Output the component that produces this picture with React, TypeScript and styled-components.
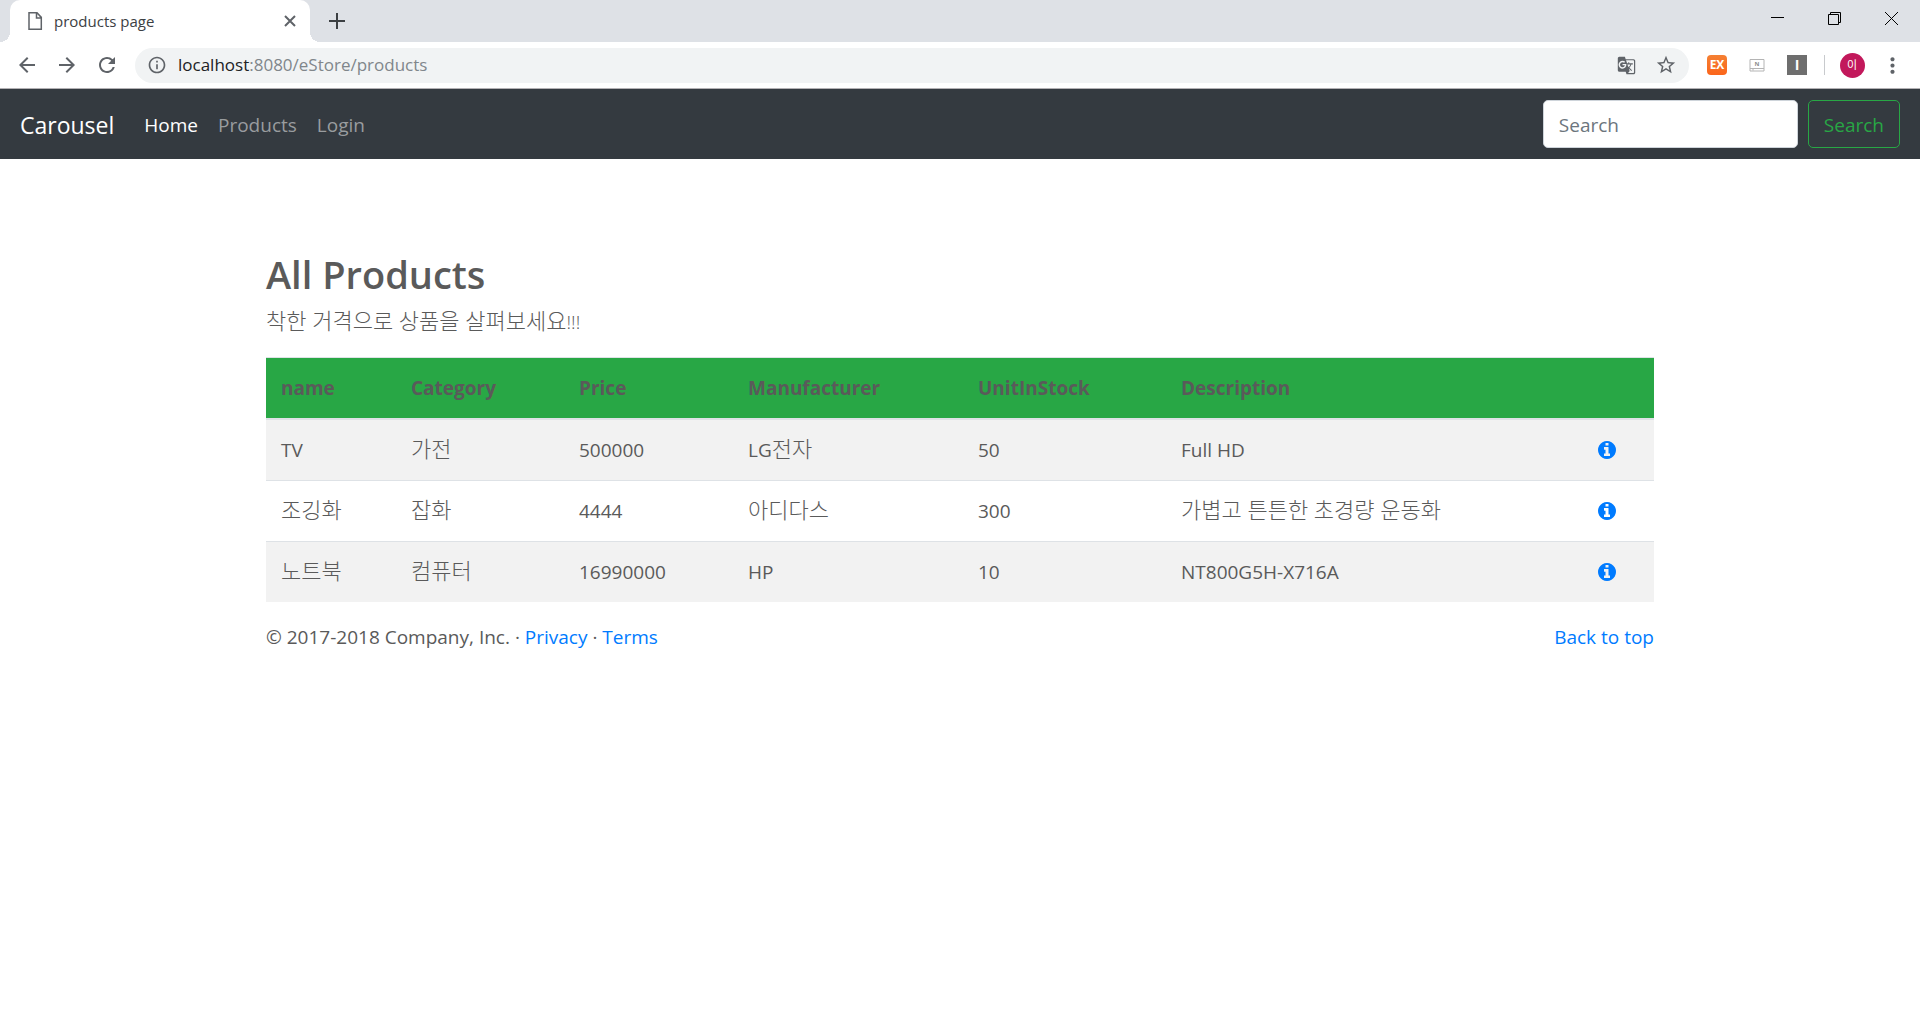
import React from "react";
import styled, { createGlobalStyle, css } from "styled-components";
import { MdArrowBack, MdArrowForward, MdRefresh, MdInfoOutline, MdStarBorder, MdGTranslate, MdMoreVert } from "react-icons/md";

const GlobalStyle = createGlobalStyle`
  *, *::before, *::after { box-sizing: border-box; }
  body {
    margin: 0;
    background: #fff;
    color: #5a5a5a;
    font-family: "Open Sans", "Noto Sans CJK KR", sans-serif;
    font-size: 19px;
    line-height: 30px;
  }
  button, input { font: inherit; }
  button { cursor: pointer; }
`;

/* Browser window */

const TabStrip = styled.header`
  display: flex;
  align-items: stretch;
  height: 42px;
  padding-left: 10px;
  background: #dee1e6;
`;

const Tab = styled.div`
  position: relative;
  display: flex;
  align-items: center;
  width: 300px;
  padding: 0 12px 0 16px;
  border-radius: 10px 10px 0 0;
  background: #fff;
  color: #3c4043;
  font-size: 15px;
  line-height: 20px;

  &::before,
  &::after {
    content: "";
    position: absolute;
    bottom: 0;
    width: 10px;
    height: 10px;
  }
  &::before {
    left: -10px;
    background: radial-gradient(circle at 0 0, transparent 10px, #fff 10px);
  }
  &::after {
    right: -10px;
    background: radial-gradient(circle at 100% 0, transparent 10px, #fff 10px);
  }
`;

const TabTitle = styled.span`
  flex: 1;
  margin-left: 10px;
`;

const IconButton = styled.button<{ $size?: number; $color?: string }>`
  display: flex;
  align-items: center;
  justify-content: center;
  flex: none;
  width: ${(p) => p.$size ?? 40}px;
  height: ${(p) => p.$size ?? 40}px;
  padding: 0;
  border: 0;
  background: none;
  color: ${(p) => p.$color ?? "#5f6368"};
`;

const NewTab = styled(IconButton)`
  margin: 6px 0 0 12px;
`;

const WindowControls = styled.div`
  display: flex;
  margin-left: auto;
`;

const WindowButton = styled(IconButton)`
  width: 57px;
  height: 37px;
`;

const Toolbar = styled.div`
  display: flex;
  align-items: center;
  height: 47px;
  padding: 0 8px 0 7px;
  border-bottom: 1px solid #b3b1b4;
  background: #fff;
`;

const AddressBar = styled.div`
  display: flex;
  align-items: center;
  flex: 1;
  height: 35px;
  margin: 0 8px;
  padding: 0 3px 0 12px;
  border-radius: 18px;
  background: #f1f3f4;
  color: #5f6368;
`;

const Url = styled.div`
  flex: 1;
  margin-left: 11px;
  color: #80868b;
  font-size: 17px;
  line-height: 24px;
`;

const UrlHost = styled.span`
  color: #202124;
`;

const ExtensionBadge = styled.span<{ $kind: "ex" | "plain" }>`
  display: flex;
  align-items: center;
  justify-content: center;
  width: 20px;
  height: 20px;
  color: #fff;
  font-weight: 700;
  line-height: 20px;
  ${(p) =>
    p.$kind === "ex"
      ? css`
          border-radius: 4px;
          background: linear-gradient(#f58033, #fb651b);
          font-size: 12px;
        `
      : css`
          background: #6e6e6e;
          font-size: 14px;
        `}
`;

const Divider = styled.span`
  width: 1px;
  height: 20px;
  margin: 0 7px;
  background: #c8cacd;
`;

const Avatar = styled.span`
  width: 25px;
  height: 25px;
  border-radius: 50%;
  background: #c2185b;
  color: #fff;
  font-size: 11px;
  line-height: 24px;
  text-align: center;
`;

/* Site navigation */

const Navbar = styled.nav`
  display: flex;
  align-items: center;
  min-height: 70px;
  padding: 10px 20px;
  background: #343a40;
`;

const Brand = styled.a`
  margin-right: 20px;
  padding-top: 2px;
  color: #fff;
  font-size: 23px;
  line-height: 38px;
  text-decoration: none;
`;

const NavList = styled.ul`
  display: flex;
  flex: 1;
  margin: 0;
  padding: 0;
  list-style: none;
`;

const NavLink = styled.a<{ $active?: boolean }>`
  display: block;
  padding: 11px 10px 9px;
  color: ${(p) => (p.$active ? "#fff" : "#999c9f")};
  text-decoration: none;
`;

const SearchForm = styled.form`
  display: flex;
  gap: 10px;
`;

const SearchInput = styled.input`
  width: 255px;
  height: 48px;
  padding: 2px 15px 0;
  border: 1px solid #ced4da;
  border-radius: 5px;
  background: #fff;
  color: #495057;
  &::placeholder {
    color: #6c757d;
    opacity: 1;
  }
`;

const SearchButton = styled.button`
  height: 48px;
  padding: 2px 15px 0;
  border: 1px solid #28a745;
  border-radius: 5px;
  background: transparent;
  color: #28a745;
`;

/* Page content */

const Container = styled.main`
  max-width: 1388px;
  margin: 0 auto;
  padding-top: 91px;
`;

const Title = styled.h1`
  margin: 0 0 9px;
  font-size: 38px;
  font-weight: 600;
  line-height: 48px;
`;

const Lead = styled.p`
  margin: 0 0 20px;
  font-weight: 300;
`;

const Table = styled.table`
  width: 100%;
  margin-bottom: 20px;
  border-spacing: 0;
  table-layout: fixed;
`;

const HeadCell = styled.th`
  padding: 15px;
  border-top: 1px solid #dee2e6;
  border-bottom: 2px solid #dee2e6;
  background: #28a745 padding-box;
  font-size: 19px;
  font-weight: 700;
  text-align: left;
`;

const Row = styled.tr`
  &:nth-child(odd) {
    background: #f2f2f2;
  }
  &:not(:first-child) td {
    border-top: 1px solid #dee2e6;
  }
`;

const Cell = styled.td`
  padding: 15px;
`;

const Korean = styled.span`
  font-size: 22px;
  font-weight: 300;
  line-height: 20px;
`;

const Link = styled.a`
  color: #007bff;
  text-decoration: none;
`;

const InfoLink = styled(Link)`
  display: flex;
`;

const Footer = styled.footer`
  display: flex;
  justify-content: space-between;
`;

const columns = [
  { label: "name", width: 130 },
  { label: "Category", width: 168 },
  { label: "Price", width: 169 },
  { label: "Manufacturer", width: 230 },
  { label: "UnitInStock", width: 203 },
  { label: "Description", width: 417 },
  { label: "", width: 71 },
];

const products = [
  ["TV", "가전", "500000", "LG전자", "50", "Full HD"],
  ["조깅화", "잡화", "4444", "아디다스", "300", "가볍고 튼튼한 초경량 운동화"],
  ["노트북", "컴퓨터", "16990000", "HP", "10", "NT800G5H-X716A"],
];

function InfoCircle() {
  return (
    <svg width="18" height="18" viewBox="0 0 1536 1536" fill="currentColor" aria-hidden="true">
      <path d="M1024 1248v-160q0-14-9-23t-23-9h-96V544q0-14-9-23t-23-9H544q-14 0-23 9t-9 23v160q0 14 9 23t23 9h96v320h-96q-14 0-23 9t-9 23v160q0 14 9 23t23 9h448q14 0 23-9t9-23zM896 352V192q0-14-9-23t-23-9H672q-14 0-23 9t-9 23v160q0 14 9 23t23 9h192q14 0 23-9t9-23zm640 416q0 209-103 385.500T1153.500 1433 768 1536t-385.500-103T103 1153.500 0 768t103-385.500T382.500 103 768 0t385.500 103T1433 382.500 1536 768z" />
    </svg>
  );
}

function MixedText({ text }: { text: string }) {
  const parts = text.split(/([가-힣][가-힣 ]*)/).filter(Boolean);
  return (
    <>
      {parts.map((part, i) =>
        /[가-힣]/.test(part) ? <Korean key={i}>{part}</Korean> : part
      )}
    </>
  );
}

function BrowserChrome() {
  return (
    <>
      <TabStrip>
        <Tab>
          <svg width="18" height="20" viewBox="0 0 18 20" fill="none" stroke="#5f6368" strokeWidth="1.5">
            <path d="M3 1.8h8l4.300 4.600v11.800H3zM10.500 2v5h5" />
          </svg>
          <TabTitle>products page</TabTitle>
          <IconButton $size={16} aria-label="Close tab">
            <svg width="12" height="12" stroke="currentColor" strokeWidth="2"><path d="M1 1l10 10M11 1L1 11" /></svg>
          </IconButton>
        </Tab>
        <NewTab $size={30} $color="#3c4043" aria-label="New tab">
          <svg width="16" height="16" stroke="currentColor" strokeWidth="2"><path d="M8 0v16M0 8h16" /></svg>
        </NewTab>
        <WindowControls>
          <WindowButton $color="#000" aria-label="Minimize">
            <svg width="13" height="13"><path d="M0 5.5h13" stroke="currentColor" /></svg>
          </WindowButton>
          <WindowButton $color="#000" aria-label="Restore">
            <svg width="13" height="13" fill="none" stroke="currentColor">
              <path d="M.5 2.500h10v10H.5zM2.500 2.500V.5h10v10h-2" />
            </svg>
          </WindowButton>
          <WindowButton $color="#000" aria-label="Close window">
            <svg width="13" height="13" stroke="currentColor"><path d="M0 0l13 13M13 0L0 13" /></svg>
          </WindowButton>
        </WindowControls>
      </TabStrip>
      <Toolbar>
        <IconButton aria-label="Back"><MdArrowBack size={24} /></IconButton>
        <IconButton aria-label="Forward"><MdArrowForward size={24} /></IconButton>
        <IconButton aria-label="Reload"><MdRefresh size={24} /></IconButton>
        <AddressBar>
          <MdInfoOutline size={20} />
          <Url><UrlHost>localhost</UrlHost>:8080/eStore/products</Url>
          <IconButton aria-label="Translate"><MdGTranslate size={19} /></IconButton>
          <IconButton aria-label="Bookmark"><MdStarBorder size={22} /></IconButton>
        </AddressBar>
        <IconButton aria-label="EX extension"><ExtensionBadge $kind="ex">EX</ExtensionBadge></IconButton>
        <IconButton aria-label="Keyboard extension">
          <svg width="16" height="13" viewBox="0 0 16 13" fill="none" stroke="#b4b4b4">
            <path d="M1 .5h14v11.500H1zM1 9.500h14M4 9.500v2" />
            <text x="8" y="7" fill="#8c8c8c" stroke="none" fontSize="6" fontWeight="700" textAnchor="middle">N</text>
          </svg>
        </IconButton>
        <IconButton aria-label="I extension"><ExtensionBadge $kind="plain">I</ExtensionBadge></IconButton>
        <Divider />
        <IconButton aria-label="Profile"><Avatar>이</Avatar></IconButton>
        <IconButton aria-label="Menu"><MdMoreVert size={25} /></IconButton>
      </Toolbar>
    </>
  );
}

export default function App() {
  return (
    <>
      <GlobalStyle />
      <BrowserChrome />
      <Navbar>
        <Brand href="#">Carousel</Brand>
        <NavList>
          <li><NavLink href="#" $active>Home</NavLink></li>
          <li><NavLink href="#">Products</NavLink></li>
          <li><NavLink href="#">Login</NavLink></li>
        </NavList>
        <SearchForm onSubmit={(e) => e.preventDefault()}>
          <SearchInput type="text" placeholder="Search" aria-label="Search" />
          <SearchButton type="submit">Search</SearchButton>
        </SearchForm>
      </Navbar>
      <Container>
        <Title>All Products</Title>
        <Lead><MixedText text="착한 거격으로 상품을 살펴보세요!!!" /></Lead>
        <Table>
          <colgroup>
            {columns.map((c, i) => <col key={i} width={c.width} />)}
          </colgroup>
          <thead>
            <tr>
              {columns.map((c, i) => <HeadCell key={i} scope="col">{c.label}</HeadCell>)}
            </tr>
          </thead>
          <tbody>
            {products.map((row) => (
              <Row key={row[0]}>
                {row.map((value, i) => <Cell key={i}><MixedText text={value} /></Cell>)}
                <Cell>
                  <InfoLink href="#" aria-label={`${row[0]} details`}><InfoCircle /></InfoLink>
                </Cell>
              </Row>
            ))}
          </tbody>
        </Table>
        <Footer>
          <span>© 2017-2018 Company, Inc. · <Link href="#">Privacy</Link> · <Link href="#">Terms</Link></span>
          <Link href="#">Back to top</Link>
        </Footer>
      </Container>
    </>
  );
}
